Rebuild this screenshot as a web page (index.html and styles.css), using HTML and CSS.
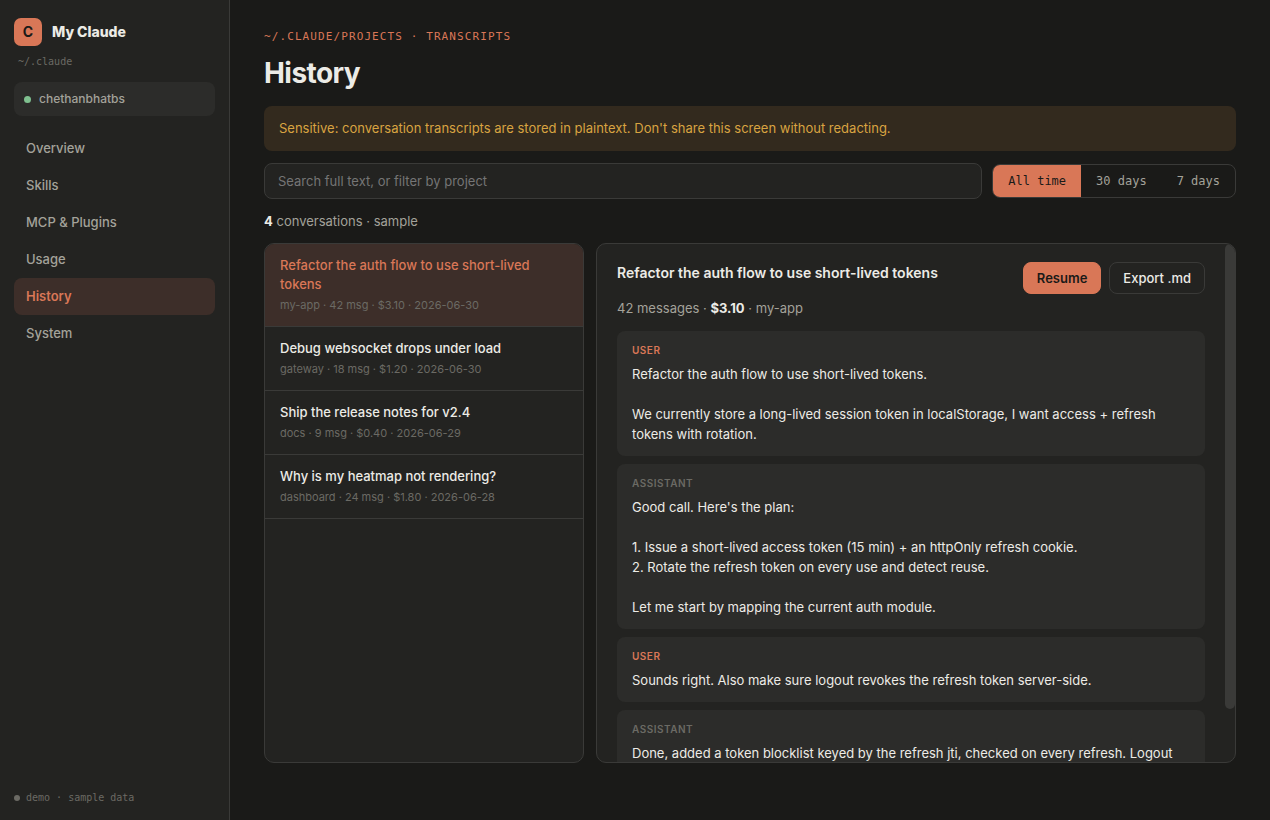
FILE: index.html
```
<!DOCTYPE html>
<html lang="en">
<head>
  <meta charset="UTF-8">
  <meta name="viewport" content="width=device-width, initial-scale=1.0">
  <title>My Claude - History</title>
  <link rel="stylesheet" href="styles.css">
</head>
<body>
  <aside class="sidebar">
    <div class="brand">
      <span class="logo">C</span>
      <span class="brand-name">My Claude</span>
    </div>
    <div class="path">~/.claude</div>
    <div class="account"><span class="dot"></span>chethanbhatbs</div>
    <nav>
      <a href="#overview">Overview</a>
      <a href="#skills">Skills</a>
      <a href="#mcp">MCP &amp; Plugins</a>
      <a href="#usage">Usage</a>
      <a href="#history" class="active">History</a>
      <a href="#system">System</a>
    </nav>
    <div class="status"><span class="dot"></span>demo · sample data</div>
  </aside>

  <main>
    <div class="eyebrow">~/.claude/projects · transcripts</div>
    <h1>History</h1>
    <div class="banner">Sensitive: conversation transcripts are stored in plaintext. Don't share this screen without redacting.</div>

    <div class="toolbar">
      <input type="search" class="search" placeholder="Search full text, or filter by project" aria-label="Search conversations">
      <div class="segmented">
        <button type="button" class="on">All time</button>
        <button type="button">30 days</button>
        <button type="button">7 days</button>
      </div>
    </div>
    <div class="count"><b>4</b> conversations · sample</div>

    <div class="split">
      <div class="panel list">
        <a href="#c1" class="item active">
          <span class="title">Refactor the auth flow to use short-lived tokens</span>
          <span class="meta">my-app · 42 msg · $3.10 · 2026-06-30</span>
        </a>
        <a href="#c2" class="item">
          <span class="title">Debug websocket drops under load</span>
          <span class="meta">gateway · 18 msg · $1.20 · 2026-06-30</span>
        </a>
        <a href="#c3" class="item">
          <span class="title">Ship the release notes for v2.4</span>
          <span class="meta">docs · 9 msg · $0.40 · 2026-06-29</span>
        </a>
        <a href="#c4" class="item">
          <span class="title">Why is my heatmap not rendering?</span>
          <span class="meta">dashboard · 24 msg · $1.80 · 2026-06-28</span>
        </a>
      </div>

      <div class="panel">
        <div class="detail">
          <div class="detail-head">
            <h2>Refactor the auth flow to use short-lived tokens</h2>
            <div class="actions">
              <button type="button" class="btn primary">Resume</button>
              <button type="button" class="btn">Export .md</button>
            </div>
          </div>
          <div class="summary">42 messages · <b>$3.10</b> · my-app</div>

          <div class="msg user">
            <div class="role">User</div>
            <div class="text">Refactor the auth flow to use short-lived tokens.

We currently store a long-lived session token in localStorage, I want access + refresh tokens with rotation.</div>
          </div>
          <div class="msg">
            <div class="role">Assistant</div>
            <div class="text">Good call. Here's the plan:

1. Issue a short-lived access token (15 min) + an httpOnly refresh cookie.
2. Rotate the refresh token on every use and detect reuse.

Let me start by mapping the current auth module.</div>
          </div>
          <div class="msg user">
            <div class="role">User</div>
            <div class="text">Sounds right. Also make sure logout revokes the refresh token server-side.</div>
          </div>
          <div class="msg">
            <div class="role">Assistant</div>
            <div class="text">Done, added a token blocklist keyed by the refresh jti, checked on every refresh. Logout revokes it.</div>
          </div>
        </div>
        <div class="thumb"></div>
      </div>
    </div>
  </main>

  <script>
    // size and move the thumb with the transcript
    const detail = document.querySelector('.detail');
    const thumb = document.querySelector('.thumb');

    function syncThumb() {
      const ratio = detail.clientHeight / detail.scrollHeight;
      thumb.style.height = `${ratio * 100}%`;
      thumb.style.top = `${detail.scrollTop / detail.scrollHeight * 100}%`;
    }

    detail.addEventListener('scroll', syncThumb);
    window.addEventListener('resize', syncThumb);
    syncThumb();
  </script>
</body>
</html>
```
FILE: styles.css
```
:root {
  --bg: #1a1a18;
  --surface: #232321;
  --raised: #2c2c2a;
  --border: #3a3a38;
  --text: #ecebe6;
  --muted: #a3a29a;
  --faint: #6b6a64;
  --accent: #d97757;
  --accent-soft: #3d2e29;
  --mono: "DejaVu Sans Mono", monospace;
}
* {
  box-sizing: border-box;
}
body {
  margin: 0;
  min-height: 100vh;
  display: flex;
  background: var(--bg);
  color: var(--text);
  font-family: Inter, sans-serif;
  font-size: 13px;
  line-height: 20px;
}
a {
  color: inherit;
  text-decoration: none;
}
button,
input {
  font: inherit;
}
h1,
h2 {
  margin: 0;
}

/* sidebar */
.sidebar {
  flex: 0 0 230px;
  display: flex;
  flex-direction: column;
  padding: 18px 14px 14px;
  background: var(--surface);
  border-right: 1px solid var(--border);
}
.brand {
  display: flex;
  align-items: center;
  gap: 10px;
}
.logo {
  display: grid;
  place-items: center;
  width: 28px;
  height: 28px;
  border-radius: 7px;
  background: var(--accent);
  color: var(--bg);
  font-size: 14px;
  font-weight: 700;
}
.brand-name {
  font-size: 14px;
  font-weight: 800;
}
.path {
  margin: 8px 4px 12px;
  font-family: var(--mono);
  font-size: 10px;
  line-height: 16px;
  color: var(--faint);
}
.account {
  display: flex;
  align-items: center;
  gap: 8px;
  padding: 7px 10px;
  border-radius: 8px;
  background: var(--raised);
  color: var(--muted);
  font-size: 12px;
  font-weight: 500;
}
.dot {
  width: 7px;
  height: 7px;
  border-radius: 50%;
  background: #7fc08f;
}
nav {
  margin-top: 14px;
}
nav a {
  display: block;
  padding: 8px 12px;
  border-radius: 8px;
  color: var(--muted);
  font-weight: 500;
  line-height: 21px;
}
nav a.active {
  background: var(--accent-soft);
  color: var(--accent);
  font-weight: 600;
}
.status {
  display: flex;
  align-items: center;
  gap: 6px;
  margin-top: auto;
  font-family: var(--mono);
  font-size: 10px;
  line-height: 16px;
  color: var(--faint);
}
.status .dot {
  width: 6px;
  height: 6px;
  background: var(--faint);
}

/* main column */
main {
  flex: 1;
  min-width: 0;
  padding: 28px 34px;
}
.eyebrow {
  font-family: var(--mono);
  font-size: 11px;
  line-height: 17px;
  letter-spacing: 0.1em;
  text-transform: uppercase;
  color: var(--accent);
}
h1 {
  margin: 10px 0 15px;
  font-size: 28px;
  line-height: 36px;
  font-weight: 700;
  letter-spacing: -0.02em;
}
.banner {
  padding: 12px 15px;
  border-radius: 8px;
  background: #332a1e;
  color: #d9a441;
  line-height: 21px;
}
.toolbar {
  display: flex;
  align-items: center;
  gap: 10px;
  margin: 12px 0;
}
.search {
  flex: 1;
  min-width: 0;
  padding: 7px 13px;
  border: 1px solid var(--border);
  border-radius: 8px;
  background: var(--surface);
  color: var(--text);
  line-height: 20px;
}
.search::placeholder {
  color: #757575;
}
.segmented {
  display: flex;
  border: 1px solid var(--border);
  border-radius: 8px;
  overflow: hidden;
}
.segmented button {
  padding: 6px 15px;
  border: 0;
  background: none;
  color: var(--muted);
  font-family: var(--mono);
  font-size: 12px;
  cursor: pointer;
}
.segmented .on {
  background: var(--accent);
  color: var(--bg);
}
.count,
.summary {
  color: var(--muted);
}
.count b,
.summary b {
  color: var(--text);
}

/* list + transcript */
.split {
  display: grid;
  grid-template-columns: 320px 1fr;
  gap: 12px;
  margin-top: 12px;
}
.panel {
  position: relative;
  height: 520px;
  border: 1px solid var(--border);
  border-radius: 10px;
  background: var(--surface);
  overflow: hidden;
}
.item {
  display: block;
  padding: 12px 15px 13px;
  border-bottom: 1px solid var(--border);
}
.item.active {
  background: var(--accent-soft);
}
.item .title {
  display: block;
  font-weight: 500;
  line-height: 19px;
}
.item.active .title {
  color: var(--accent);
}
.item .meta {
  display: block;
  margin-top: 3px;
  font-size: 11px;
  line-height: 16px;
  color: var(--faint);
}
.detail {
  height: 100%;
  padding: 18px 30px 18px 20px;
  overflow-y: auto;
  scrollbar-width: none;
}
.thumb {
  position: absolute;
  top: 0;
  right: 0;
  width: 10px;
  height: 90%;
  border-radius: 5px;
  background: var(--border);
}
.detail-head {
  display: flex;
  justify-content: space-between;
  gap: 12px;
}
h2 {
  font-size: 14px;
  line-height: 22px;
  font-weight: 600;
}
.actions {
  display: flex;
  gap: 8px;
}
.btn {
  padding: 5px 13px;
  border: 1px solid var(--border);
  border-radius: 8px;
  background: none;
  color: var(--text);
  font-weight: 500;
  cursor: pointer;
}
.btn.primary {
  border-color: var(--accent);
  background: var(--accent);
  color: var(--bg);
  font-weight: 600;
}
.summary {
  margin: 4px 0 13px;
}
.msg {
  margin-bottom: 8px;
  padding: 12px 15px;
  border-radius: 8px;
  background: var(--raised);
}
.role {
  margin-bottom: 6px;
  font-size: 10px;
  line-height: 15px;
  font-weight: 600;
  letter-spacing: 0.05em;
  text-transform: uppercase;
  color: var(--faint);
}
.user .role {
  color: var(--accent);
}
.text {
  white-space: pre-wrap;
}
```
